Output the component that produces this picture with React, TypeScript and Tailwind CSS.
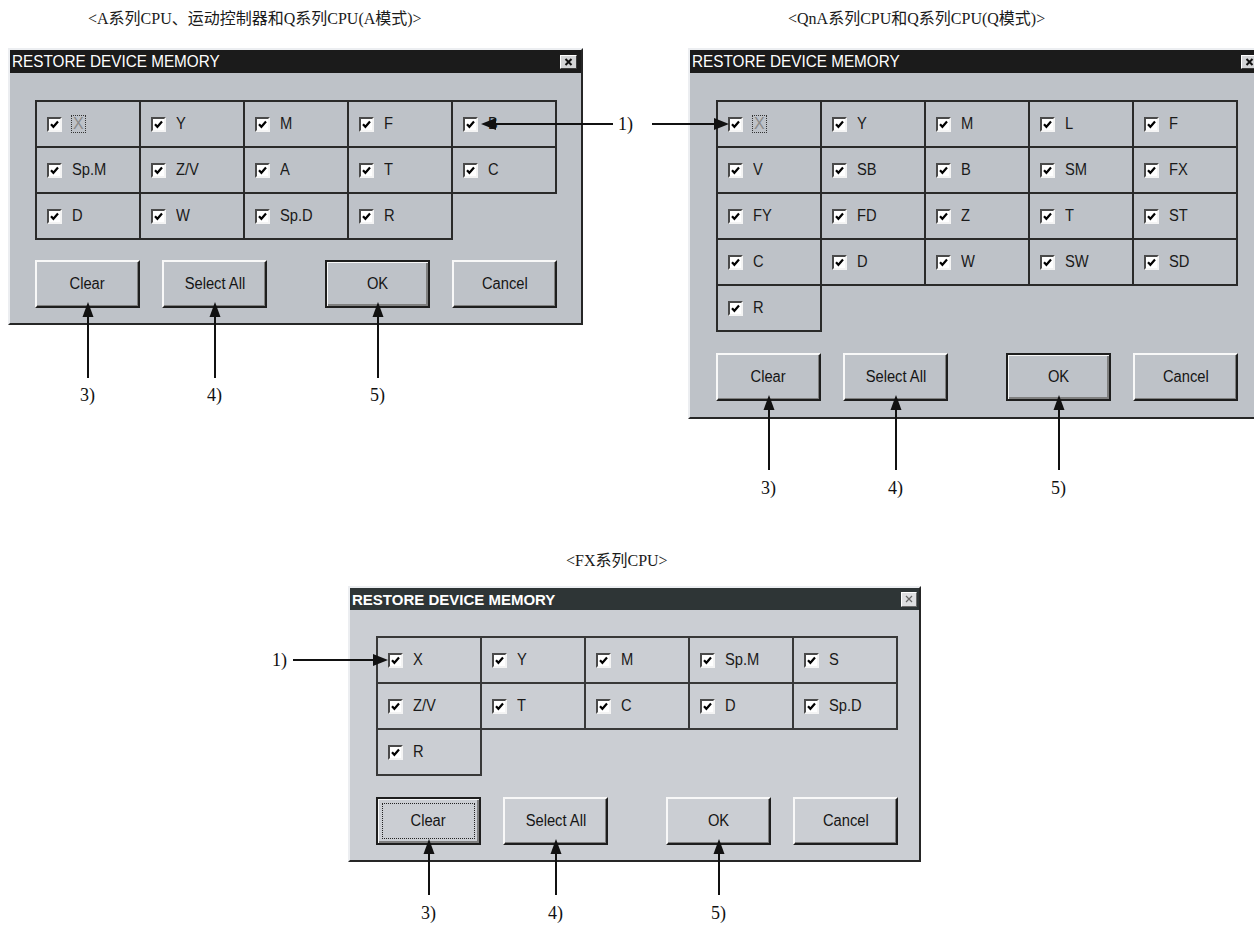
import React from "react";

const sans = "font-['Liberation_Sans',Arial,sans-serif]";
const serif = "font-['Liberation_Serif','Noto_Sans_CJK_SC',serif]";

const aRows = [
  ["X", "Y", "M", "F", "B"],
  ["Sp.M", "Z/V", "A", "T", "C"],
  ["D", "W", "Sp.D", "R"],
];

const qRows = [
  ["X", "Y", "M", "L", "F"],
  ["V", "SB", "B", "SM", "FX"],
  ["FY", "FD", "Z", "T", "ST"],
  ["C", "D", "W", "SW", "SD"],
  ["R"],
];

const fxRows = [
  ["X", "Y", "M", "Sp.M", "S"],
  ["Z/V", "T", "C", "D", "Sp.D"],
  ["R"],
];

function Check() {
  return (
    <span className="flex h-[15px] w-[15px] shrink-0 items-center justify-center border-2 border-t-[#4a4a4a] border-l-[#4a4a4a] border-r-[#f4f4f4] border-b-[#f4f4f4] bg-white">
      <svg width="11" height="11" viewBox="0 0 11 11" className="block">
        <path d="M2 5.2 L4.4 7.8 L9 2.6" fill="none" stroke="#000" strokeWidth="2.2" />
      </svg>
    </span>
  );
}

function CloseBox({ fx }: { fx: boolean }) {
  if (fx) {
    return (
      <span className="flex h-[15px] w-[16px] items-center justify-center border border-t-white border-l-white border-r-[#6a6a6a] border-b-[#6a6a6a] bg-[#dedfe1]">
        <svg width="8" height="8" viewBox="0 0 8 8" className="block">
          <path d="M1 1 L7 7 M7 1 L1 7" stroke="#666" strokeWidth="1.2" />
        </svg>
      </span>
    );
  }
  return (
    <span className="flex h-[14px] w-[17px] items-center justify-center border border-t-white border-l-white border-r-[#3c3c3c] border-b-[#3c3c3c] bg-[#d3d4d6]">
      <svg width="9" height="8" viewBox="0 0 9 8" className="block">
        <path d="M1.5 1 L7.5 7 M7.5 1 L1.5 7" stroke="#111" strokeWidth="2" />
      </svg>
    </span>
  );
}

function Btn({ label, kind }: { label: string; kind: "normal" | "default" | "focus" }) {
  const look =
    kind === "normal"
      ? "border-2 border-t-[#f8f8f8] border-l-[#f8f8f8] border-r-[#1e1e1e] border-b-[#1e1e1e] shadow-[inset_-1px_-1px_0_#7f7f7f]"
      : "border-2 border-[#1e1e1e] shadow-[inset_1px_1px_0_#f8f8f8,inset_-2px_-2px_0_#7f7f7f]";
  return (
    <div className={`relative flex h-[48px] w-[105px] shrink-0 items-center justify-center text-[16px] text-[#151515] ${look}`}>
      {kind === "focus" && (
        <span className="absolute inset-[4px] border border-dotted border-[#222]" />
      )}
      <span className="relative inline-block scale-x-[0.92]">{label}</span>
    </div>
  );
}

function Grid({ rows, focusX, fx }: { rows: string[][]; focusX: boolean; fx: boolean }) {
  return (
    <div className="grid grid-cols-[106px_104px_104px_104px_104px]">
      {rows.map((row, r) =>
        row.map((label, c) => {
          const cls = [
            "flex items-center pl-[10px] border-b-2 border-r-2",
            fx ? "border-[#383838]" : "border-[#2a2a2a]",
            c === 0 ? "border-l-2" : "",
            r === 0 ? "h-[48px] border-t-2" : "h-[46px]",
          ].join(" ");
          const isFocus = focusX && r === 0 && c === 0;
          return (
            <div key={`${r}-${c}`} className={cls}>
              <Check />
              {isFocus ? (
                <span className="ml-[9px] border border-dotted border-[#333] px-[1px] text-[16px] leading-[16px] text-[#8a8a8a]">
                  X
                </span>
              ) : (
                <span className="ml-[10px] inline-block origin-left scale-x-[0.92] text-[16px] leading-none text-[#1a1a1a]">
                  {label}
                </span>
              )}
            </div>
          );
        })
      )}
    </div>
  );
}

function Dialog({
  fx = false,
  rows,
  focusX = false,
  bodyClass,
  btnClass,
}: {
  fx?: boolean;
  rows: string[][];
  focusX?: boolean;
  bodyClass: string;
  btnClass: string;
}) {
  return (
    <div
      className={`${sans} border-2 border-t-[#eceef1] border-l-[#eceef1] border-r-[#262626] border-b-[#262626] ${
        fx ? "bg-[#cbced3]" : "bg-[#bec2c8]"
      }`}
    >
      <div
        className={`flex items-center justify-between pl-[2px] ${
          fx ? "h-[22px] bg-[#2e3536] pr-[2px]" : "h-[23px] bg-[#1b1b1b] pr-[4px]"
        }`}
      >
        {fx ? (
          <span className="text-[15px] font-bold leading-none text-white">RESTORE DEVICE MEMORY</span>
        ) : (
          <span className="inline-block origin-left scale-x-[0.9] text-[17px] leading-none text-white">
            RESTORE DEVICE MEMORY
          </span>
        )}
        <CloseBox fx={fx} />
      </div>
      <div className={bodyClass}>
        <Grid rows={rows} focusX={focusX} fx={fx} />
        <div className={`flex ${btnClass}`}>
          <Btn label="Clear" kind={fx ? "focus" : "normal"} />
          <div className="ml-[22px]">
            <Btn label="Select All" kind="normal" />
          </div>
          <div className="ml-[58px]">
            <Btn label="OK" kind={fx ? "normal" : "default"} />
          </div>
          <div className="ml-[22px]">
            <Btn label="Cancel" kind="normal" />
          </div>
        </div>
      </div>
    </div>
  );
}

function Callout({ label, h, labelClass }: { label: string; h: number; labelClass: string }) {
  return (
    <div className="flex w-[105px] flex-col items-center">
      <svg width="14" height={h} viewBox={`0 0 14 ${h}`} className="block">
        <polygon points="7,0 1.5,15 12.5,15" fill="#111" />
        <line x1="7" y1="14" x2="7" y2={h} stroke="#111" strokeWidth="2" />
      </svg>
      <span className={`${serif} text-[18px] leading-[20px] text-[#111] ${labelClass}`}>{label}</span>
    </div>
  );
}

function Callouts({ rowClass, h, labelClass }: { rowClass: string; h: number; labelClass: string }) {
  return (
    <div className={`relative z-10 flex ${rowClass}`}>
      <Callout label="3)" h={h} labelClass={labelClass} />
      <div className="ml-[22px]">
        <Callout label="4)" h={h} labelClass={labelClass} />
      </div>
      <div className="ml-[58px]">
        <Callout label="5)" h={h} labelClass={labelClass} />
      </div>
    </div>
  );
}

export default function App() {
  return (
    <div className="relative h-[940px] w-[1254px] overflow-hidden bg-white">
      <div className="flex h-[551px] items-start pt-[9px]">
        <div className="ml-[8px] w-[575px] shrink-0">
          <p className={`${serif} h-[20px] pl-[80px] text-[16px] leading-[20px] text-[#1a1a1a]`}>
            &lt;A系列CPU、运动控制器和Q系列CPU(A模式)&gt;
          </p>
          <div className="mt-[19px]">
            <Dialog
              rows={aRows}
              focusX
              bodyClass="pl-[25px] pr-[24px] pt-[27px] pb-[15px]"
              btnClass="mt-[20px]"
            />
          </div>
          <Callouts rowClass="-mt-[23px] pl-[27px]" h={76} labelClass="mt-[7px]" />
        </div>

        <div className="ml-[105px] w-[576px] shrink-0">
          <p className={`${serif} h-[20px] pl-[100px] text-[16px] leading-[20px] text-[#1a1a1a]`}>
            &lt;QnA系列CPU和Q系列CPU(Q模式)&gt;
          </p>
          <div className="mt-[19px]">
            <Dialog
              rows={qRows}
              focusX
              bodyClass="pl-[26px] pr-[24px] pt-[27px] pb-[16px]"
              btnClass="mt-[21px]"
            />
          </div>
          <Callouts rowClass="-mt-[24px] pl-[28px]" h={75} labelClass="mt-[8px]" />
        </div>
      </div>

      <div className="ml-[348px] w-[573px]">
        <p className={`${serif} h-[20px] pl-[218px] text-[16px] leading-[20px] text-[#1a1a1a]`}>
          &lt;FX系列CPU&gt;
        </p>
        <div className="mt-[15px]">
          <Dialog
            fx
            rows={fxRows}
            bodyClass="pl-[26px] pr-[21px] pt-[26px] pb-[15px]"
            btnClass="mt-[21px]"
          />
        </div>
        <Callouts rowClass="-mt-[23px] pl-[28px]" h={56} labelClass="mt-[8px]" />
      </div>

      {/* 1) callouts lie over the dialogs */}
      <svg width="132" height="14" viewBox="0 0 132 14" className="absolute left-[481px] top-[117px]">
        <polygon points="0,7 15,1 15,13" fill="#111" />
        <line x1="14" y1="7" x2="132" y2="7" stroke="#111" strokeWidth="2" />
      </svg>
      <span className={`${serif} absolute left-[618px] top-[114px] text-[18px] leading-[20px] text-[#111]`}>1)</span>
      <svg width="77" height="14" viewBox="0 0 77 14" className="absolute left-[652px] top-[117px]">
        <line x1="0" y1="7" x2="63" y2="7" stroke="#111" strokeWidth="2" />
        <polygon points="77,7 62,1 62,13" fill="#111" />
      </svg>

      <span className={`${serif} absolute left-[272px] top-[650px] text-[18px] leading-[20px] text-[#111]`}>1)</span>
      <svg width="95" height="14" viewBox="0 0 95 14" className="absolute left-[293px] top-[653px]">
        <line x1="0" y1="7" x2="81" y2="7" stroke="#111" strokeWidth="2" />
        <polygon points="95,7 80,1 80,13" fill="#111" />
      </svg>
    </div>
  );
}
